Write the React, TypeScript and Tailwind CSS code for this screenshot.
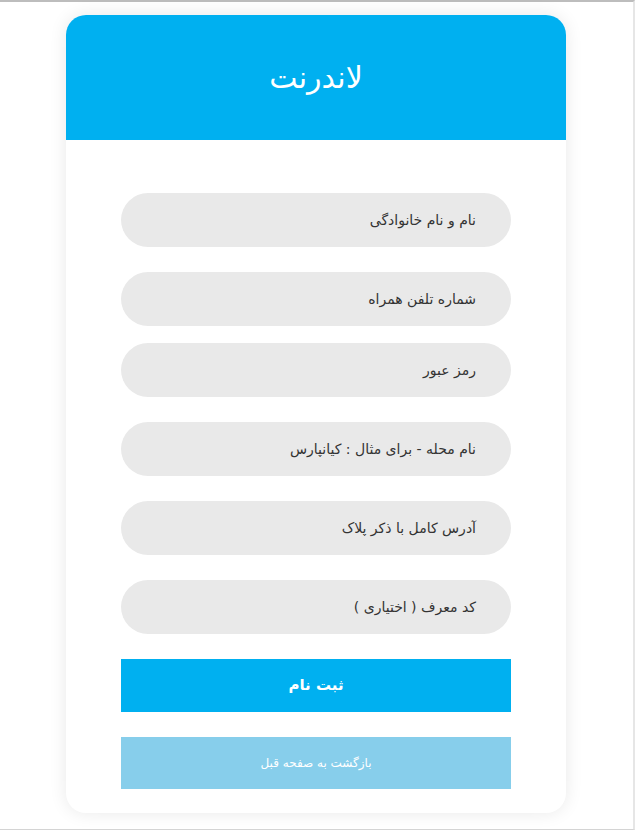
export default function App() {
  const fields = [
    { label: 'نام و نام خانوادگی', mt: 'mt-0' },
    { label: 'شماره تلفن همراه', mt: 'mt-[25px]' },
    { label: 'رمز عبور', mt: 'mt-[17px]' },
    { label: 'نام محله - برای مثال : کیانپارس', mt: 'mt-[25px]' },
    { label: 'آدرس کامل با ذکر پلاک', mt: 'mt-[25px]' },
    { label: 'کد معرف ( اختیاری )', mt: 'mt-[25px]' },
  ];

  return (
    <div
      dir="rtl"
      className="h-[830px] w-[635px] border-t-2 border-b border-r-2 border-t-[#bdbdbd] border-b-[#d4d4d4] border-r-[#e6e6e6] bg-white pt-[13px] font-['DejaVu_Sans',sans-serif]"
    >
      <div className="mr-[67px] w-[500px] overflow-hidden rounded-[20px] bg-white shadow-[0_0_18px_rgba(0,0,0,0.09)]">
        <div className="flex h-[125px] items-center justify-center bg-[#00b0f0]">
          <h1 className="text-[30px] text-white">لاندرنت</h1>
        </div>

        <div className="flex flex-col px-[55px] pt-[53px] pb-[24px]">
          {fields.map((f) => (
            <div
              key={f.label}
              className={`${f.mt} flex h-[54px] items-center rounded-full bg-[#e9e9e9] pr-[35px] text-[14px] text-[#333]`}
            >
              {f.label}
            </div>
          ))}

          <button className="mt-[25px] flex h-[53px] items-center justify-center bg-[#00b0f0] text-[15px] font-bold text-white">
            ثبت نام
          </button>

          <button className="mt-[25px] flex h-[52px] items-center justify-center bg-[#87ceeb] text-[12px] text-white">
            بازگشت به صفحه قبل
          </button>
        </div>
      </div>
    </div>
  );
}
